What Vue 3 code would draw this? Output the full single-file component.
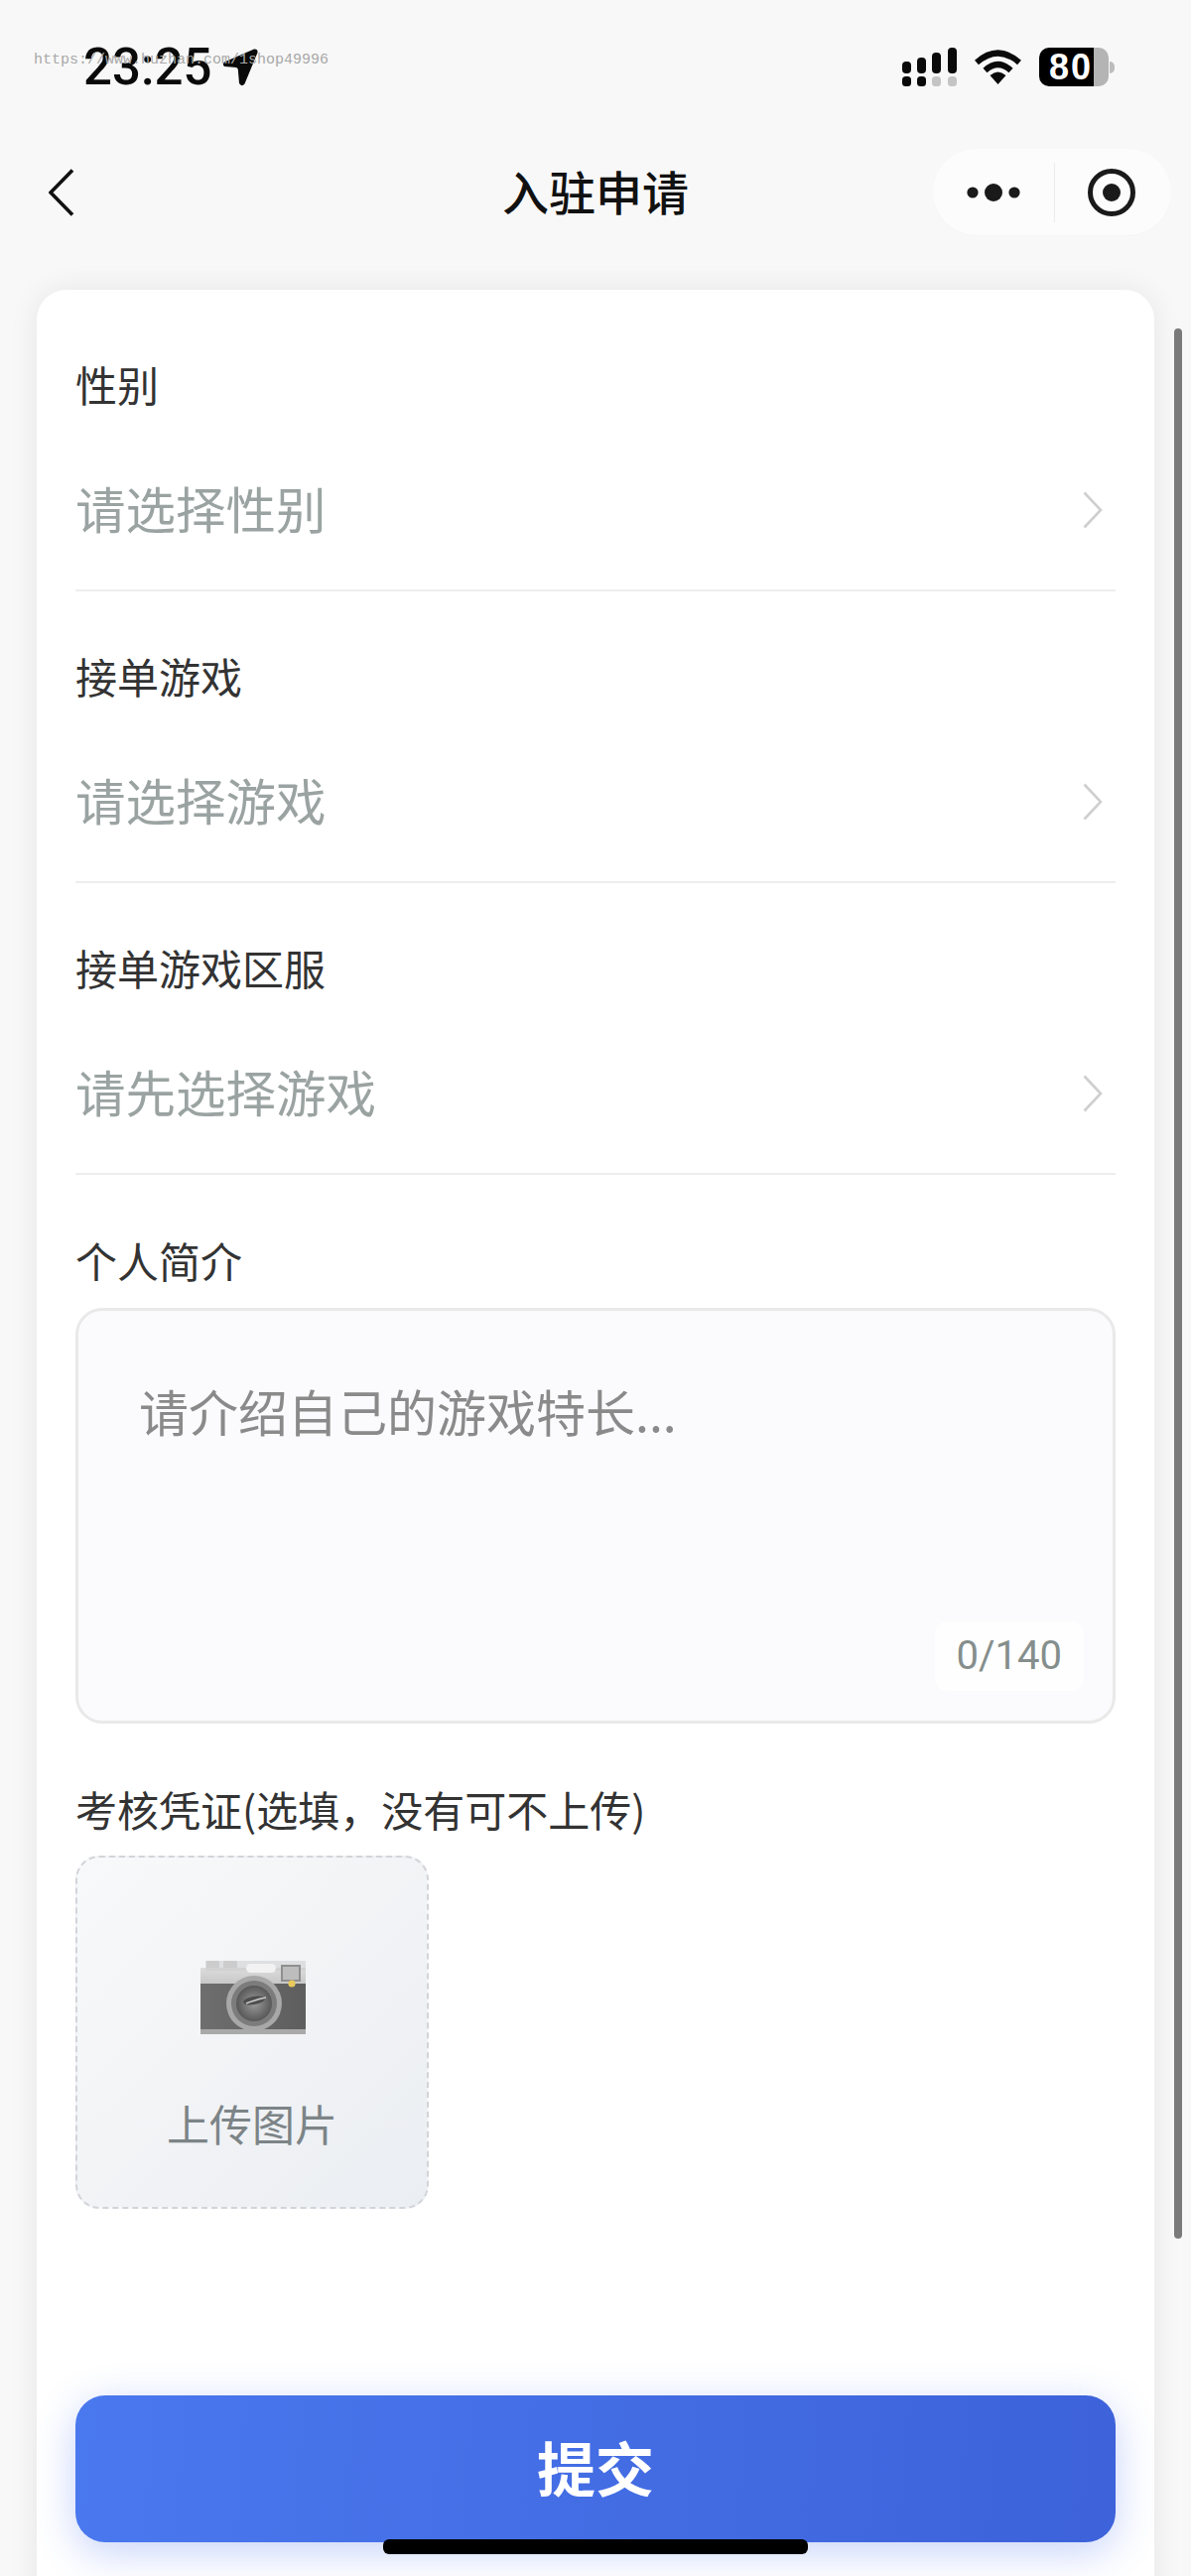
<script setup>
const fields = [
  { label: '性别', placeholder: '请选择性别' },
  { label: '接单游戏', placeholder: '请选择游戏' },
  { label: '接单游戏区服', placeholder: '请先选择游戏' },
]
</script>

<template>
  <div class="page">
    <div class="watermark">https://www.huzhan.com/1shop49996</div>

    <header class="status">
      <div class="status-left">
        <span class="time">23:25</span>
        <svg class="arrow" width="36" height="38" viewBox="0 0 36 38">
          <path d="M32 0.5 L2 13.5 Q-0.5 16.5 2.5 18 L14 19 Q15.5 19.5 15.8 21 L17 35 Q19.5 39 22.5 35.5 L35.5 4 Q36 0 32 0.5 Z" fill="#0a0a0a" />
        </svg>
      </div>
      <div class="status-right">
        <svg width="55" height="39" viewBox="0 0 55 39">
          <g fill="#0a0a0a">
            <rect x="0" y="14" width="9" height="12" rx="4" />
            <rect x="15" y="10" width="9" height="16" rx="4" />
            <rect x="30" y="5" width="9" height="21" rx="4" />
            <rect x="46" y="0" width="9" height="26" rx="4" />
            <rect x="0" y="29" width="9" height="10" rx="3.5" />
            <rect x="15" y="29" width="9" height="10" rx="3.5" />
          </g>
          <g fill="#c4c4c4">
            <rect x="30" y="29" width="9" height="10" rx="3.5" />
            <rect x="46" y="29" width="9" height="10" rx="3.5" />
          </g>
        </svg>
        <svg class="wifi" width="47" height="36" viewBox="0 0 47 36">
          <path d="M2 13 Q23.5 -6 45 13" fill="none" stroke="#0a0a0a" stroke-width="6" />
          <path d="M10.5 21 Q23.5 9 36.5 21" fill="none" stroke="#0a0a0a" stroke-width="6" />
          <path d="M15.5 26 Q23.5 19 31.5 26 L23.5 35 Z" fill="#0a0a0a" />
        </svg>
        <div class="battery-wrap">
          <div class="battery">80</div>
          <span class="nub"></span>
        </div>
      </div>
    </header>

    <nav class="nav">
      <svg class="back" width="26" height="48" viewBox="0 0 26 48">
        <path d="M24 1.5 L2 24 L24 46.5" fill="none" stroke="#111" stroke-width="3.6" />
      </svg>
      <h1 class="title">入驻申请</h1>
      <div class="capsule">
        <svg width="54" height="20" viewBox="0 0 54 20">
          <circle cx="6" cy="10" r="5.6" fill="#1a1a1a" />
          <circle cx="27" cy="10" r="9" fill="#1a1a1a" />
          <circle cx="48" cy="10" r="5.6" fill="#1a1a1a" />
        </svg>
        <span class="capsule-line"></span>
        <svg width="48" height="48" viewBox="0 0 48 48">
          <circle cx="24" cy="24" r="21.5" fill="none" stroke="#1a1a1a" stroke-width="5" />
          <circle cx="24" cy="24" r="9" fill="#1a1a1a" />
        </svg>
      </div>
    </nav>

    <main class="card">
      <section v-for="f in fields" :key="f.label" class="field">
        <div class="label">{{ f.label }}</div>
        <div class="select">
          <span class="placeholder">{{ f.placeholder }}</span>
          <svg class="chev" width="20" height="38" viewBox="0 0 20 38">
            <path d="M1.5 1.5 L18 19 L1.5 36.5" fill="none" stroke="#cfcfcf" stroke-width="2.6" />
          </svg>
        </div>
      </section>

      <section class="intro">
        <div class="label">个人简介</div>
        <div class="textarea">
          <div class="ta-placeholder">请介绍自己的游戏特长...</div>
          <div class="count">0/140</div>
        </div>
      </section>

      <section class="proof">
        <div class="label">考核凭证(选填，没有可不上传)</div>
        <div class="upload">
          <svg class="camera" width="108" height="76" viewBox="0 0 108 76">
            <defs>
              <linearGradient id="camTop" x1="0" y1="0" x2="0" y2="1">
                <stop offset="0" stop-color="#dcdcdc" />
                <stop offset="1" stop-color="#b9b9b9" />
              </linearGradient>
              <linearGradient id="camBody" x1="0" y1="0" x2="1" y2="0">
                <stop offset="0" stop-color="#6e6e6e" />
                <stop offset="1" stop-color="#5e5e5e" />
              </linearGradient>
              <radialGradient id="lens" cx="0.5" cy="0.5" r="0.5">
                <stop offset="0" stop-color="#9b9b9b" />
                <stop offset="0.7" stop-color="#6c6c6c" />
                <stop offset="1" stop-color="#585858" />
              </radialGradient>
            </defs>
            <rect x="6" y="1" width="13" height="10" rx="1" fill="#cfcfcf" />
            <rect x="23" y="1" width="14" height="10" rx="1" fill="#cfcfcf" />
            <rect x="0" y="8" width="106" height="28" fill="url(#camTop)" />
            <rect x="5" y="1" width="101" height="10" fill="#c9c9c9" opacity="0.5" />
            <rect x="46" y="4" width="30" height="9" rx="4.5" fill="#f2f2f2" />
            <rect x="81" y="5" width="20" height="17" fill="#8f8f8f" />
            <rect x="83" y="7" width="16" height="13" fill="#bdbdbd" />
            <rect x="0" y="24" width="106" height="46" fill="url(#camBody)" />
            <rect x="0" y="70" width="106" height="5" fill="#a9a9a9" />
            <circle cx="92" cy="24" r="3.6" fill="#e8c95c" />
            <circle cx="54" cy="44" r="28" fill="#a8a8a8" />
            <circle cx="54" cy="44" r="23" fill="#7c7c7c" />
            <circle cx="54" cy="44" r="18" fill="url(#lens)" />
            <ellipse cx="54" cy="41" rx="11" ry="4" transform="rotate(-10 54 41)" fill="#4d4d4d" />
            <path d="M46 44 Q56 40 66 38" stroke="#c8c8c8" stroke-width="1.6" fill="none" />
          </svg>
          <div class="upload-text">上传图片</div>
        </div>
      </section>

      <button class="submit" type="button">提交</button>
    </main>

    <div class="scrollbar"></div>
    <div class="home"></div>
  </div>
</template>

<style scoped>
.page {
  position: relative;
  width: 1200px;
  height: 2596px;
  overflow: hidden;
  background: #f8f8f8;
  font-family: "Noto Sans CJK SC", "Liberation Sans", sans-serif;
  color: #333;
}
.watermark {
  position: absolute;
  left: 34px;
  top: 52px;
  z-index: 2;
  font: 15px/18px "Liberation Mono", monospace;
  color: #a8a8a8;
  white-space: nowrap;
}
.status {
  display: flex;
  justify-content: space-between;
  align-items: center;
  height: 39px;
  padding: 48px 77px 0 84px;
}
.status-left {
  display: flex;
  align-items: center;
  gap: 11px;
}
.time {
  font: 500 51px/41px Roboto, "Liberation Sans", sans-serif;
  color: #0a0a0a;
}
.status-right {
  display: flex;
  align-items: center;
}
.wifi {
  margin-left: 18px;
}
.battery-wrap {
  display: flex;
  align-items: center;
  margin-left: 18px;
}
.battery {
  width: 70px;
  height: 39px;
  border-radius: 10px;
  background: linear-gradient(90deg, #000 0 79%, #b4b4b4 79% 100%);
  color: #fff;
  font: 700 36px/39px "Liberation Sans", sans-serif;
  letter-spacing: 2px;
  padding-left: 10px;
  box-sizing: border-box;
}
.nub {
  width: 5px;
  height: 12px;
  border-radius: 0 6px 6px 0;
  background: #bcbcbc;
  margin-left: 1px;
}
.nav {
  display: grid;
  grid-template-columns: 1fr auto 1fr;
  align-items: center;
  height: 87px;
  margin-top: 63px;
  padding: 0 20px;
}
.back {
  margin-left: 29px;
}
.title {
  margin: 0 0 4px;
  font-size: 47px;
  line-height: 60px;
  font-weight: 500;
  color: #111;
}
.capsule {
  justify-self: end;
  display: flex;
  align-items: center;
  box-sizing: border-box;
  width: 240px;
  height: 87px;
  padding: 0 36px 0 34px;
  justify-content: space-between;
  border-radius: 44px;
  background: #fcfcfc;
  box-shadow: 0 1px 2px rgba(0, 0, 0, 0.02);
}
.capsule-line {
  width: 1px;
  height: 60px;
  background: #ececec;
}
.card {
  box-sizing: border-box;
  height: 2400px;
  margin: 55px 37px 0;
  padding: 10px 39px 0;
  background: #fff;
  border-radius: 30px 30px 0 0;
  box-shadow: 0 0 30px rgba(0, 0, 0, 0.08);
}
.field {
  padding: 55px 0 53px;
  border-bottom: 2px solid #eeeeee;
}
.label {
  font-size: 42px;
  line-height: 60px;
  color: #333;
  white-space: nowrap;
}
.select {
  display: flex;
  justify-content: space-between;
  align-items: center;
  margin-top: 64px;
  padding-right: 13px;
}
.chev {
  margin-top: 6px;
}
.placeholder {
  font-size: 50.5px;
  line-height: 60px;
  color: #9aa3a1;
}
.intro {
  padding-top: 56px;
}
.textarea {
  position: relative;
  box-sizing: border-box;
  height: 419px;
  margin-top: 18px;
  border: 3px solid #e9e9e9;
  border-radius: 27px;
  background: #fbfbfd;
  padding: 70px 0 0 61px;
}
.ta-placeholder {
  font-size: 50px;
  line-height: 60px;
  color: #8a8a8a;
}
.count {
  position: absolute;
  right: 29px;
  bottom: 30px;
  padding: 8px 22px;
  border-radius: 12px;
  background: #fefefe;
  font: 400 40px/54px Roboto, "Liberation Sans", sans-serif;
  color: #858e8c;
}
.proof {
  padding-top: 56px;
}
.upload {
  display: flex;
  flex-direction: column;
  align-items: center;
  box-sizing: border-box;
  width: 356px;
  height: 356px;
  margin-top: 17px;
  padding-top: 103px;
  border: 2px dashed #d2d4d9;
  border-radius: 24px;
  background: linear-gradient(135deg, #f8f9fa, #ebeef2);
}
.camera {
  margin-left: 3px;
}
.upload-text {
  margin-top: 58px;
  font-size: 43px;
  line-height: 60px;
  color: #7c8487;
}
.submit {
  display: block;
  width: 1048px;
  height: 148px;
  margin-top: 188px;
  padding: 0 0 5px;
  border: 0;
  border-radius: 30px;
  background: linear-gradient(95deg, #4a78ee, #3d62da);
  box-shadow: 0 10px 40px rgba(70, 110, 240, 0.3);
  color: #fff;
  font-family: inherit;
  font-size: 59px;
  font-weight: 700;
}
.scrollbar {
  position: absolute;
  left: 1183px;
  top: 331px;
  width: 8px;
  height: 1925px;
  border-radius: 4px;
  background: #7a7a7a;
}
.home {
  position: absolute;
  left: 386px;
  top: 2559px;
  width: 428px;
  height: 15px;
  border-radius: 6px;
  background: #000;
}
</style>
